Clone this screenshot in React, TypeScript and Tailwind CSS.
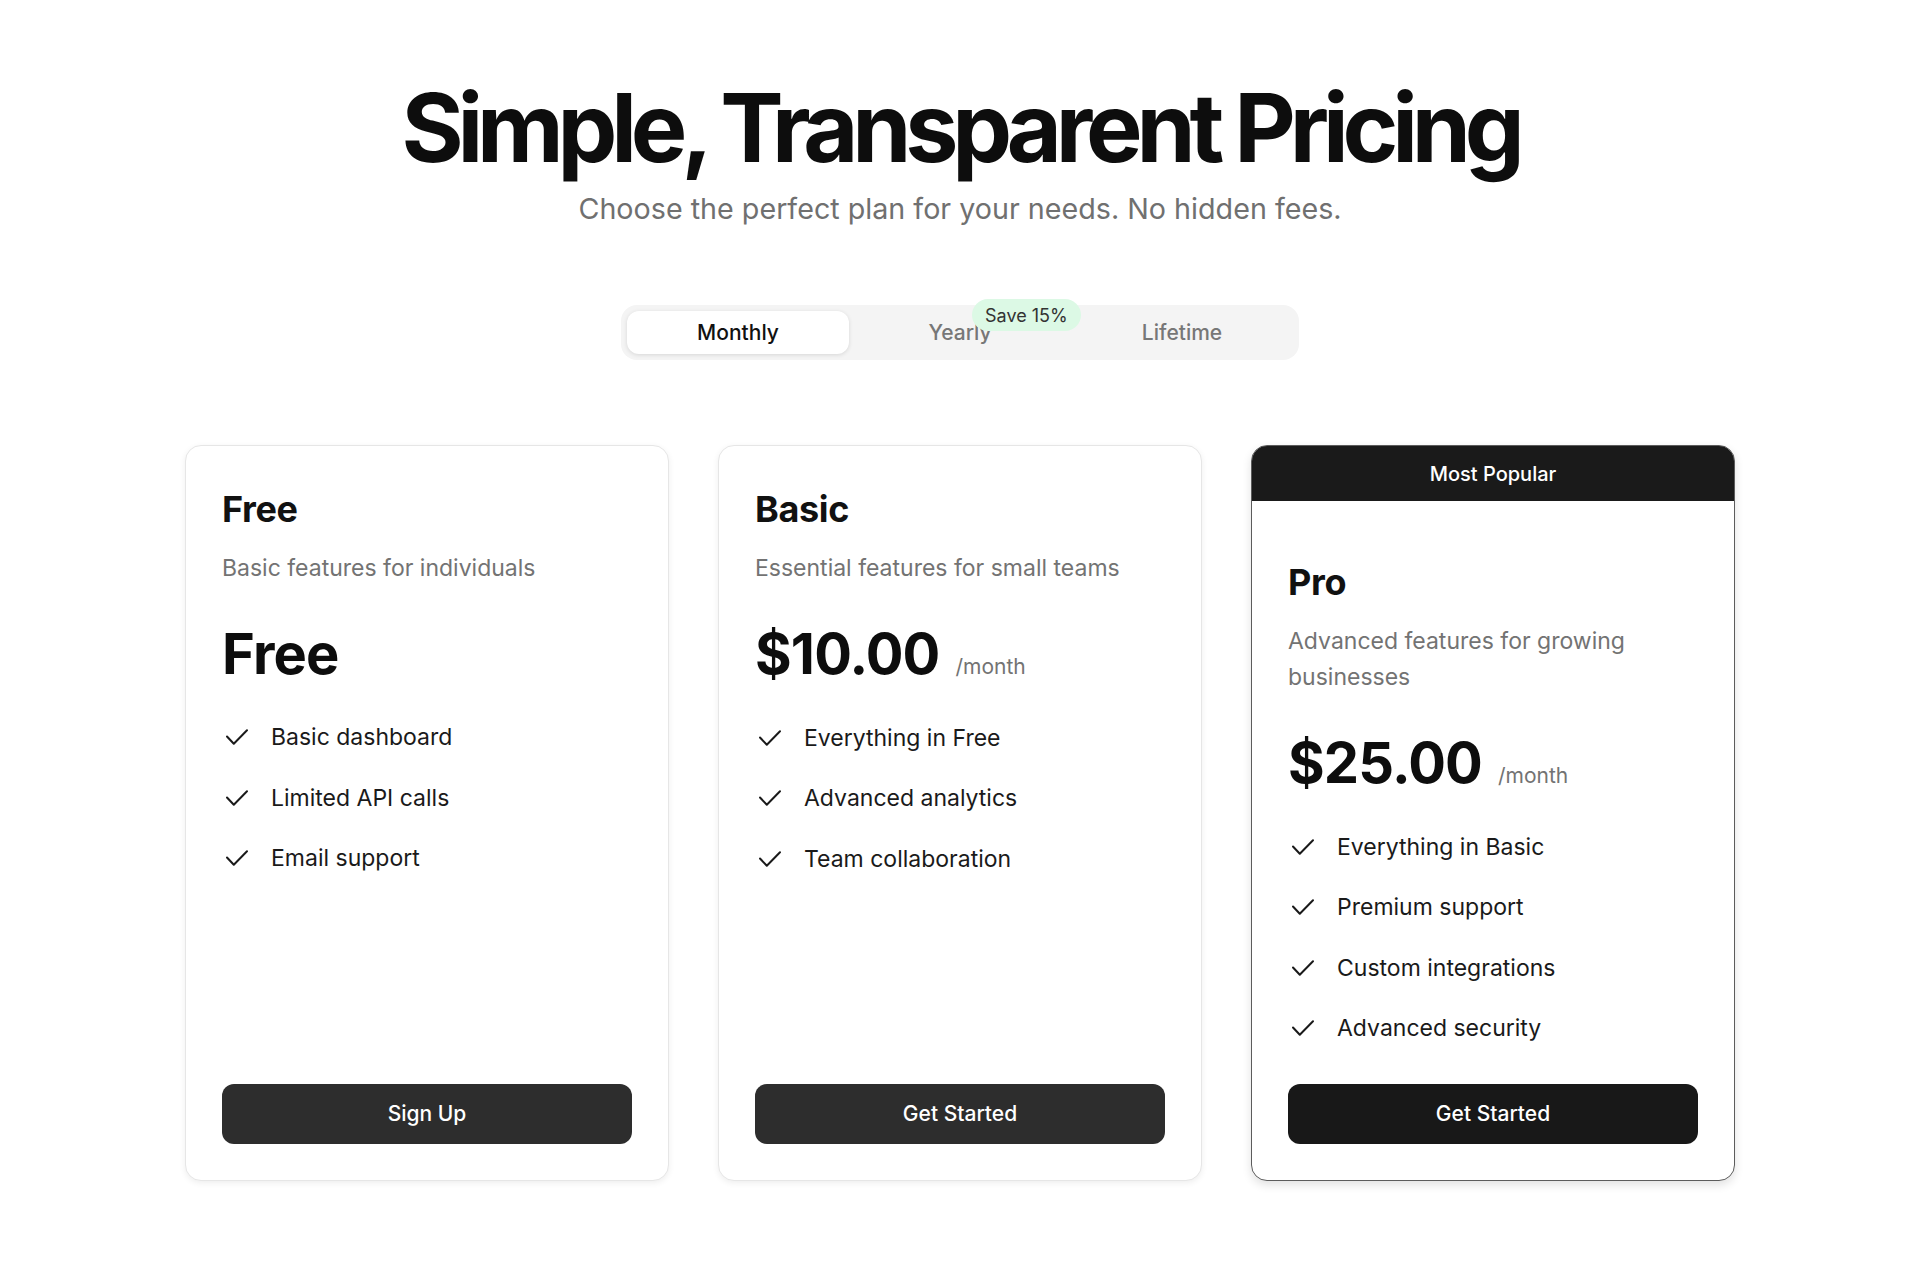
import React from "react";

type Plan = {
  name: string;
  desc: string;
  price: string;
  period?: string;
  features: string[];
  cta: string;
  popular?: boolean;
};

const plans: Plan[] = [
  {
    name: "Free",
    desc: "Basic features for individuals",
    price: "Free",
    features: ["Basic dashboard", "Limited API calls", "Email support"],
    cta: "Sign Up",
  },
  {
    name: "Basic",
    desc: "Essential features for small teams",
    price: "$10.00",
    period: "/month",
    features: ["Everything in Free", "Advanced analytics", "Team collaboration"],
    cta: "Get Started",
  },
  {
    name: "Pro",
    desc: "Advanced features for growing businesses",
    price: "$25.00",
    period: "/month",
    features: ["Everything in Basic", "Premium support", "Custom integrations", "Advanced security"],
    cta: "Get Started",
    popular: true,
  },
];

function CheckIcon() {
  return (
    <svg
      width="22"
      height="16"
      viewBox="0 0 22 16"
      fill="none"
      stroke="#1a1a1a"
      strokeWidth="2"
      strokeLinecap="round"
      strokeLinejoin="round"
      className="ml-1 shrink-0"
    >
      <polyline points="1,7.5 7.8,14.8 21,1.2" />
    </svg>
  );
}

function Card({ plan }: { plan: Plan }) {
  return (
    <div
      className={
        plan.popular
          ? "flex flex-col overflow-hidden rounded-2xl border border-[#5c5c5c] bg-white shadow-[0_4px_10px_rgba(0,0,0,0.12)]"
          : "flex flex-col overflow-hidden rounded-2xl border border-[#e6e6e6] bg-white shadow-[0_2px_6px_rgba(0,0,0,0.07)]"
      }
    >
      {plan.popular && (
        <div className="flex h-[55px] items-center justify-center bg-[#1a1a1a] text-[20px] font-medium text-white">
          Most Popular
        </div>
      )}
      <div className={plan.popular ? "flex flex-1 flex-col px-9 pb-9 pt-[54px]" : "flex flex-1 flex-col p-9"}>
        <h3 className="text-[36px] font-bold leading-[54px] tracking-[-0.01em] text-[#111]">{plan.name}</h3>
        <p className="mt-[14px] text-[23px] leading-9 text-[#737373]">{plan.desc}</p>
        <div className="mt-10 flex items-baseline gap-4">
          <span className="text-[56px] font-bold leading-none tracking-[-0.015em] text-[#0d0d0d]">{plan.price}</span>
          {plan.period && <span className="text-[21px] text-[#737373]">{plan.period}</span>}
        </div>
        <ul className="mt-[37px] flex flex-col gap-[24.5px]">
          {plan.features.map((f) => (
            <li key={f} className="flex items-center gap-[23px] text-[23px] leading-9 text-[#1a1a1a]">
              <CheckIcon />
              <span>{f}</span>
            </li>
          ))}
        </ul>
        <div className="mt-auto pt-[38px]">
          <button
            className={
              plan.popular
                ? "flex h-[60px] w-full items-center justify-center rounded-xl bg-[#181818] text-[21px] font-medium text-white"
                : "flex h-[60px] w-full items-center justify-center rounded-xl bg-[#2d2d2d] text-[21px] font-medium text-white"
            }
          >
            {plan.cta}
          </button>
        </div>
      </div>
    </div>
  );
}

export default function App() {
  return (
    <div className="min-h-screen bg-white font-['Inter',sans-serif] antialiased">
      <div className="flex flex-col items-center pt-[80px] pb-[90px]">
        <h1 className="h-[96px] text-[95px] font-bold leading-[96px] tracking-[-0.065em] text-[#0d0d0d]">
          Simple, Transparent Pricing
        </h1>
        <p className="mt-3 text-[28.7px] leading-[42px] text-[#707070]">
          Choose the perfect plan for your needs. No hidden fees.
        </p>

        <div className="mt-[75px] grid h-[55px] w-[678px] grid-cols-3 rounded-2xl bg-[#f4f4f4] p-[6px]">
          <button className="flex h-[43px] items-center justify-center rounded-xl bg-white text-[21px] font-medium text-[#111] shadow-[0_1px_4px_rgba(0,0,0,0.12)]">
            Monthly
          </button>
          <button className="relative flex h-[43px] items-center justify-center text-[21px] font-medium text-[#777]">
            Yearly
            <span className="absolute left-[123px] top-[-12px] flex h-[32px] items-center whitespace-nowrap rounded-full bg-[#dcf9e5] px-[13px] text-[18px] font-normal text-[#333]">
              Save 15%
            </span>
          </button>
          <button className="flex h-[43px] items-center justify-center text-[21px] font-medium text-[#777]">
            Lifetime
          </button>
        </div>

        <div className="mt-[85px] grid w-[1550px] grid-cols-3 gap-[49px]">
          {plans.map((p) => (
            <Card key={p.name} plan={p} />
          ))}
        </div>
      </div>
    </div>
  );
}
